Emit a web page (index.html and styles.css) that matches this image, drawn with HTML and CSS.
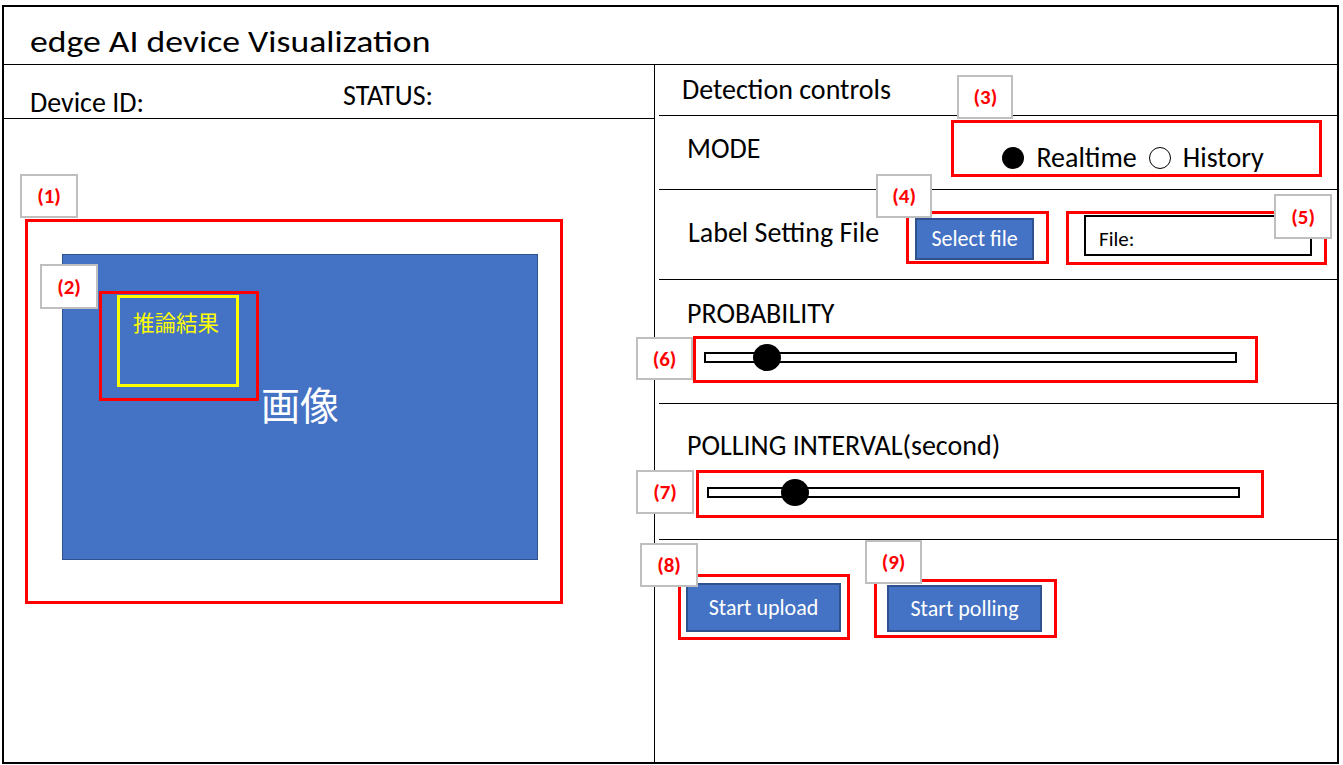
FILE: index.html
```html
<!DOCTYPE html>
<html lang="en">
<head>
<meta charset="utf-8">
<title>edge AI device Visualization</title>
<link rel="stylesheet" href="styles.css">
</head>
<body>
<div class="frame">
  <header class="title-bar">
    <h1 class="title">edge AI device Visualization</h1>
  </header>
  <div class="main">
    <section class="left">
      <div class="device-row">
        <span class="device-id">Device ID:</span>
        <span class="status">STATUS:</span>
      </div>
      <div class="viewer">
        <div class="anno viewer-anno">
          <span class="badge badge-1">(1)</span>
          <div class="image">
            <div class="anno result-anno">
              <span class="badge badge-2">(2)</span>
              <div class="result"><span class="result-text">推論結果</span></div>
            </div>
            <span class="image-label">画像</span>
          </div>
        </div>
      </div>
    </section>
    <section class="right">
      <div class="row row-head">
        <span class="row-title">Detection controls</span>
      </div>
      <div class="row row-mode">
        <span class="label label-mode">MODE</span>
        <div class="anno mode-anno">
          <span class="badge badge-3">(3)</span>
          <span class="radio radio-on"></span><span class="radio-text">Realtime</span>
          <span class="radio radio-off"></span><span class="radio-text">History</span>
        </div>
      </div>
      <div class="row row-file">
        <span class="label label-file">Label Setting File</span>
        <div class="anno file-btn-anno">
          <span class="badge badge-4">(4)</span>
          <button class="btn btn-select">Select file</button>
        </div>
        <div class="anno file-input-anno">
          <span class="badge badge-5">(5)</span>
          <div class="file-input">File:</div>
        </div>
      </div>
      <div class="row row-prob">
        <span class="label label-prob">PROBABILITY</span>
        <div class="anno slider-anno slider-prob">
          <span class="badge badge-6">(6)</span>
          <div class="track"><span class="knob knob-prob"></span></div>
        </div>
      </div>
      <div class="row row-poll">
        <span class="label label-poll">POLLING INTERVAL(second)</span>
        <div class="anno slider-anno slider-poll">
          <span class="badge badge-7">(7)</span>
          <div class="track"><span class="knob knob-poll"></span></div>
        </div>
      </div>
      <div class="row row-actions">
        <div class="anno upload-anno">
          <span class="badge badge-8">(8)</span>
          <button class="btn btn-action">Start upload</button>
        </div>
        <div class="anno polling-anno">
          <span class="badge badge-9">(9)</span>
          <button class="btn btn-action btn-polling">Start polling</button>
        </div>
      </div>
    </section>
  </div>
</div>
</body>
</html>
```

FILE: styles.css
```css
* { box-sizing: border-box; }

html, body {
  margin: 0;
  padding: 0;
  background: #ffffff;
}

body {
  font-family: Carlito, Lato, "Open Sans", sans-serif;
  color: #000000;
  width: 1343px;
  height: 765px;
  overflow: hidden;
}

.frame {
  margin: 5px 0 0 2px;
  width: 1337px;
  height: 759px;
  border: 2px solid #000;
  display: flex;
  flex-direction: column;
}

/* ---------- title ---------- */
.title-bar {
  height: 58px;
  border-bottom: 1px solid #000;
  display: flex;
  align-items: flex-start;
  padding-left: 26px;
  flex: none;
}

.title {
  margin: 17px 0 0 0;
  font-size: 30.5px;
  font-weight: 400;
  line-height: 36px;
  white-space: nowrap;
  transform: scaleX(1.17);
  transform-origin: left center;
}

.main {
  flex: 1;
  display: flex;
  min-height: 0;
}

/* ---------- left ---------- */
.left {
  width: 650px;
  flex: none;
  display: flex;
  flex-direction: column;
}

.device-row {
  height: 54px;
  border-bottom: 1px solid #000;
  display: flex;
  align-items: flex-start;
  padding-left: 26px;
  font-size: 28px;
  line-height: 34px;
  white-space: nowrap;
}

.device-id { margin-top: 21px; }
.status { margin-top: 14px; margin-left: 199px; }

.viewer {
  padding: 100px 0 0 21px;
}

.anno {
  position: relative;
  border: 3px solid #ff0000;
}

.badge {
  position: absolute;
  width: 58px;
  height: 44px;
  background: #ffffff;
  border: 2px solid #bfbfbf;
  color: #ff0000;
  font-weight: 700;
  font-size: 21px;
  line-height: 24px;
  display: flex;
  align-items: center;
  justify-content: center;
  z-index: 2;
}

.viewer-anno {
  width: 538px;
  height: 385px;
  padding: 32px 0 0 34px;
}

.badge-1 { left: -8px; top: -48px; }

.image {
  width: 476px;
  height: 306px;
  background: #4472c4;
  border: 1.5px solid #2f528f;
  padding: 36px 0 0 36px;
  display: flex;
  align-items: flex-start;
}

.result-anno {
  width: 160px;
  height: 110px;
  padding: 1px 0 0 15px;
}

.badge-2 { left: -62px; top: -30px; height: 45px; }

.result {
  width: 122px;
  height: 92px;
  border: 3px solid #ffff00;
  padding: 13px 0 0 13px;
}

.result-text {
  display: block;
  color: #ffff00;
  font-family: "Noto Sans CJK JP", sans-serif;
  font-size: 21.5px;
  line-height: 22px;
  white-space: nowrap;
}

.image-label {
  color: #ffffff;
  font-family: "Noto Sans CJK JP", sans-serif;
  font-size: 39px;
  line-height: 40px;
  margin-top: 92px;
  margin-left: 2px;
  white-space: nowrap;
}

/* ---------- right ---------- */
.right {
  flex: 1;
  border-left: 1px solid #000;
  display: flex;
  flex-direction: column;
  min-width: 0;
}

.row {
  margin-left: 4px;
  border-bottom: 1px solid #000;
  display: flex;
  align-items: flex-start;
  position: relative;
  flex: none;
  white-space: nowrap;
}

.row-head {
  height: 51px;
  padding-left: 23px;
}

.row-title,
.label {
  font-size: 28px;
  line-height: 34px;
}

.row-title { margin-top: 8px; }

.row-mode {
  height: 74px;
  padding-left: 28px;
}

.label-mode { margin-top: 16px; }

.mode-anno {
  margin-left: 191px;
  margin-top: 4px;
  width: 371px;
  height: 57px;
  display: flex;
  align-items: center;
  padding: 18px 0 0 48px;
  font-size: 28px;
}

.badge-3 { left: 3px; top: -48px; width: 56px; }

.radio {
  width: 22px;
  height: 22px;
  border-radius: 50%;
  flex: none;
}

.radio-on { background: #000; }
.radio-off { border: 1.5px solid #000; background: #fff; margin-left: 12px; }

.radio-text { margin-left: 12px; line-height: 34px; }

.row-file {
  height: 90px;
  padding-left: 29px;
}

.label-file { margin-top: 26px; }

.file-btn-anno {
  margin-left: 27px;
  margin-top: 21px;
  width: 143px;
  height: 53px;
  padding: 4px 0 0 6px;
}

.badge-4 { left: -33px; top: -40px; width: 56px; }

.btn {
  display: flex;
  align-items: center;
  justify-content: center;
  background: #4472c4;
  border: 2px solid #2f528f;
  color: #ffffff;
  font-family: inherit;
  font-size: 22px;
  line-height: 26px;
  padding: 0;
  margin: 0;
  white-space: nowrap;
}

.btn-select {
  width: 119px;
  height: 42px;
}

.file-input-anno {
  margin-left: 17px;
  margin-top: 21px;
  width: 261px;
  height: 54px;
  padding: 1px 0 0 15px;
}

.badge-5 { left: 205px; top: -20px; height: 45px; }

.file-input {
  width: 228px;
  height: 41px;
  border: 2px solid #000;
  font-size: 21px;
  line-height: 26px;
  padding: 9px 0 0 13px;
}

.row-prob {
  height: 124px;
  padding-left: 28px;
  flex-direction: column;
}

.label-prob { margin-top: 17px; }

.slider-anno {
  margin-left: 6px;
}

.slider-prob {
  margin-top: 5px;
  width: 565px;
  height: 47px;
  padding: 13px 0 0 8px;
}

.badge-6 { left: -60px; top: -2px; width: 57px; height: 43px; }

.track {
  position: relative;
  width: 533px;
  height: 11px;
  border: 2px solid #000;
  background: #fff;
}

.knob {
  position: absolute;
  width: 28px;
  height: 27px;
  border-radius: 50%;
  background: #000;
  top: -10px;
}

.knob-prob { left: 47px; }
.knob-poll { left: 72px; }

.row-poll {
  height: 136px;
  padding-left: 28px;
  flex-direction: column;
}

.label-poll { margin-top: 25px; }

.slider-poll {
  margin-left: 9px;
  margin-top: 7px;
  width: 568px;
  height: 48px;
  padding: 14px 0 0 8px;
}

.badge-7 { left: -63px; top: -3px; }

.row-actions {
  border-bottom: none;
  flex: 1;
  padding-left: 19px;
}

.upload-anno {
  margin-top: 34px;
  width: 172px;
  height: 66px;
  padding: 6px 0 0 5px;
}

.badge-8 { left: -41px; top: -34px; }

.btn-action {
  width: 155px;
  height: 49px;
}

.polling-anno {
  margin-left: 24px;
  margin-top: 39px;
  width: 183px;
  height: 59px;
  padding: 3px 0 0 10px;
}

.btn-polling { height: 47px; }

.badge-9 { left: -12px; top: -42px; width: 57px; }
```
